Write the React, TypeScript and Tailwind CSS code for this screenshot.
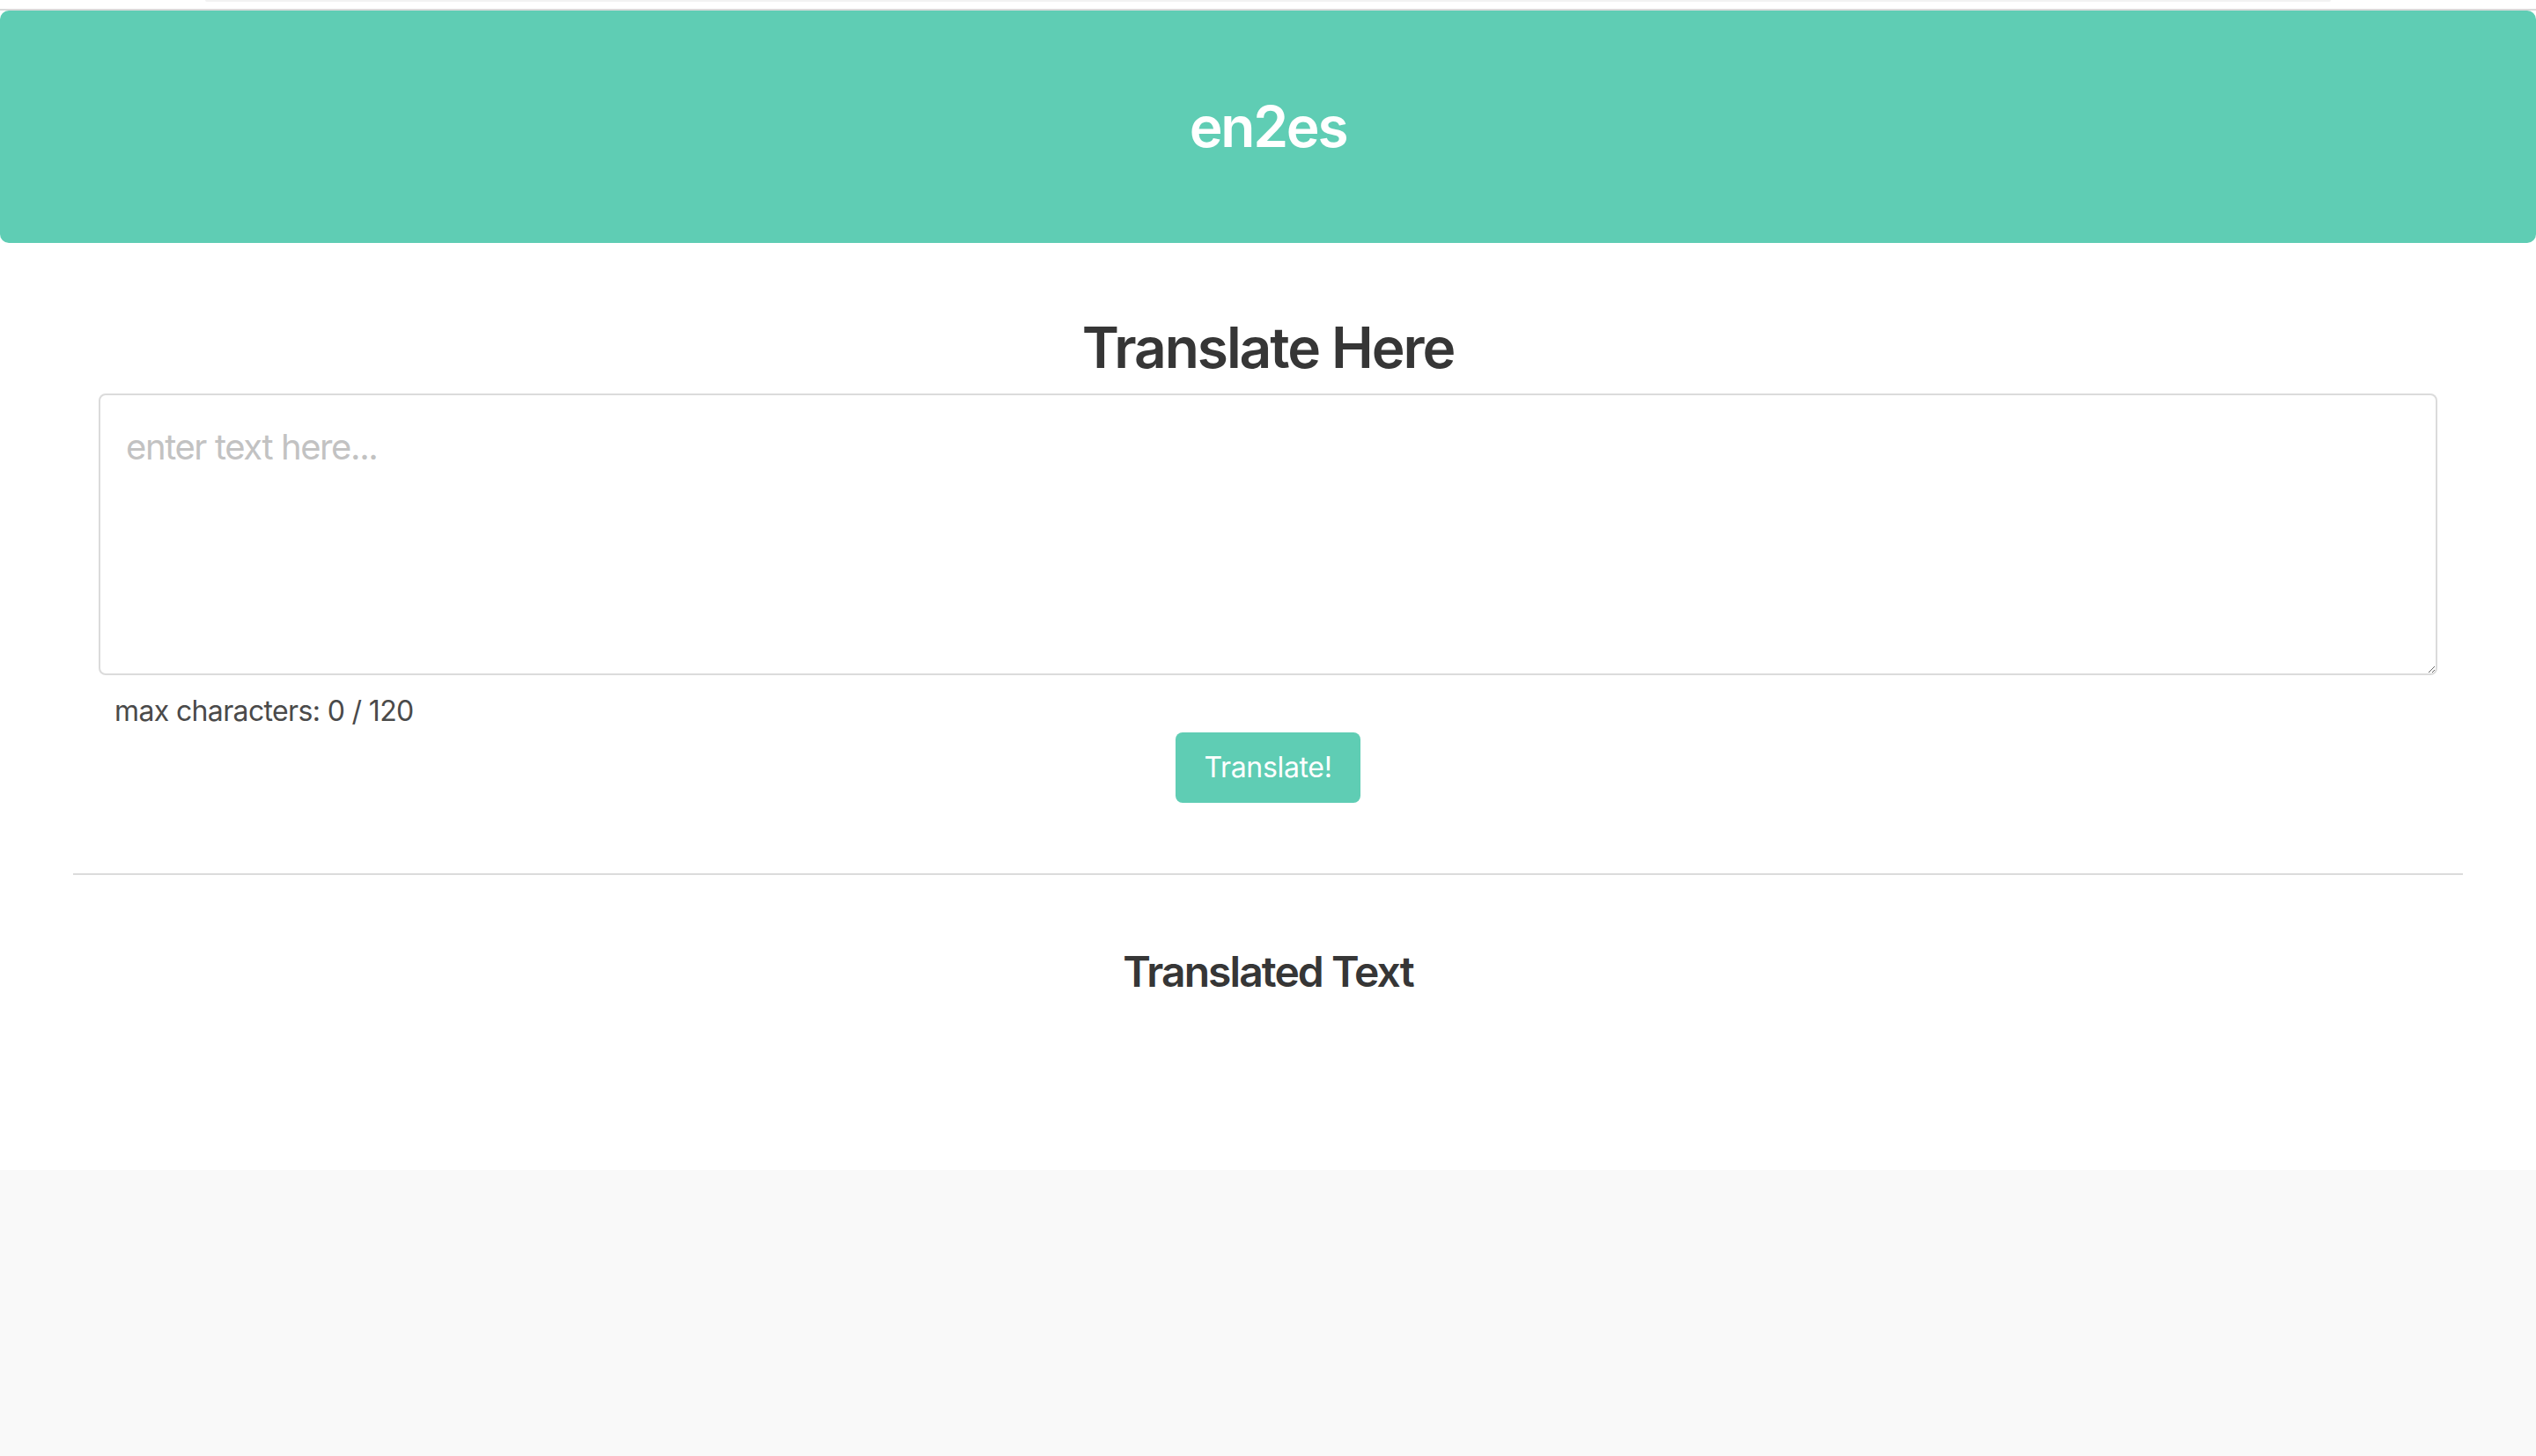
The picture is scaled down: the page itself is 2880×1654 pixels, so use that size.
import { useState } from "react";

export default function App() {
  const [text, setText] = useState("");

  return (
    <div className="min-h-screen bg-[#f9f9f9] font-['Inter','Liberation_Sans',sans-serif] text-[#4a4a4a]">
      <div className="bg-white pb-[198px]">
        {/* top strip */}
        <div className="h-[12px] border-b-2 border-[#dadada] flex justify-center">
          <div className="h-[2px] w-[2414px] rounded-b-full bg-[#f2f2f2]"></div>
        </div>

        <header className="h-[264px] rounded-[10px] bg-[#5fcdb4] flex items-center justify-center">
          <h1 className="text-[64px] leading-[72px] font-semibold tracking-[-0.035em] text-white">en2es</h1>
        </header>

        <section className="px-[83px] pt-[83px]">
          <h2 className="text-center text-[64px] leading-[72px] font-semibold tracking-[-0.032em] text-[#363636]">
            Translate Here
          </h2>

          <div className="px-[29px] mt-[16px]">
            <textarea
              value={text}
              onChange={(e) => setText(e.target.value.slice(0, 120))}
              placeholder="enter text here..."
              className="block w-full h-[320px] rounded-[8px] border-2 border-[#dbdbdb] bg-white px-[29px] py-[29px] text-[40px] leading-[60px] tracking-[-0.035em] text-[#363636] placeholder:text-[#c2c2c2] outline-none"
            />
            <p className="pl-[18px] mt-[17px] text-[32px] leading-[48px] tracking-[-0.02em] text-[#4a4a4a]">
              max characters: {text.length} / 120
            </p>
          </div>

          <div className="flex justify-center">
            <button className="h-[80px] px-[32px] rounded-[8px] bg-[#5fcdb4] text-[32px] tracking-[-0.01em] text-white">
              Translate!
            </button>
          </div>

          <hr className="mt-[80px] h-[2px] border-0 bg-[#dbdbdb]" />

          <h3 className="mt-[83px] text-center text-[48px] leading-[54px] font-semibold tracking-[-0.04em] text-[#363636]">
            Translated Text
          </h3>
        </section>
      </div>
    </div>
  );
}
